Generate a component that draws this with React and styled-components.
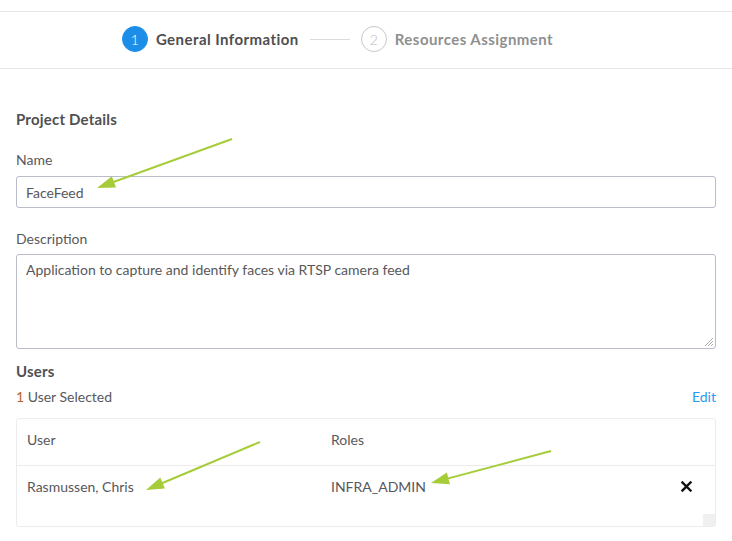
import React from "react";
import styled, { createGlobalStyle } from "styled-components";

const Global = createGlobalStyle`
  html, body { margin: 0; padding: 0; background: #fff; }
  body { font-family: Lato, "Liberation Sans", sans-serif; color: #58585b; }
  * { box-sizing: border-box; }
`;

const Page = styled.div`
  position: relative;
  width: 732px;
  height: 541px;
  padding-top: 11px;
  overflow: hidden;
`;

const StepBar = styled.div`
  height: 58px;
  border-top: 1px solid #e6e6e6;
  border-bottom: 1px solid #e6e6e6;
  display: flex;
  align-items: center;
  justify-content: center;
  padding-right: 57px;
  padding-bottom: 2px;
`;

const Step = styled.div`
  display: flex;
  align-items: center;
  gap: 8px;
`;

const Circle = styled.div`
  width: 26px;
  height: 26px;
  border-radius: 50%;
  display: flex;
  align-items: center;
  justify-content: center;
  font-size: 14px;
  font-weight: 300;
  color: ${(p) => (p.$active ? "#fff" : "#b9b9b9")};
  background: ${(p) => (p.$active ? "#1d8ee8" : "#fff")};
  border: 1px solid ${(p) => (p.$active ? "#1d8ee8" : "#c8c8c8")};
`;

const StepLabel = styled.span`
  font-size: 15px;
  font-weight: 700;
  letter-spacing: 0.45px;
  color: ${(p) => (p.$active ? "#4e4e50" : "#8f8f8f")};
`;

const Connector = styled.div`
  width: 40px;
  height: 1px;
  background: #dcdcdc;
  margin: 0 11px 0 11px;
`;

const Content = styled.div`
  padding: 0 16px;
`;

const SectionTitle = styled.h2`
  margin: ${(p) => p.$mt || 0}px 0 0;
  font-size: 15px;
  font-weight: 700;
  line-height: 20px;
  letter-spacing: 0.2px;
  color: #505052;
`;

const Label = styled.div`
  margin-top: ${(p) => p.$mt || 0}px;
  font-size: 14px;
  line-height: 18px;
  color: #58585b;
`;

const Input = styled.div`
  margin-top: ${(p) => p.$mt || 0}px;
  height: 32px;
  border: 1px solid #b9bdca;
  border-radius: 3px;
  padding: 0 9px;
  display: flex;
  align-items: center;
  font-size: 14px;
  color: #58585b;
`;

const TextArea = styled.div`
  position: relative;
  margin-top: ${(p) => p.$mt || 0}px;
  height: 95px;
  border: 1px solid #b9bdca;
  border-radius: 3px;
  padding: 6px 9px;
  font-size: 14px;
  line-height: 18px;
  color: #58585b;
`;

const Grip = styled.svg`
  position: absolute;
  right: 1px;
  bottom: 1px;
`;

const SelectedRow = styled.div`
  margin-top: ${(p) => p.$mt || 0}px;
  display: flex;
  justify-content: space-between;
  align-items: center;
  font-size: 14px;
  line-height: 18px;
`;

const Count = styled.span`
  color: #b8642c;
`;

const EditLink = styled.a`
  color: #2a9af0;
  text-decoration: none;
  font-size: 14px;
`;

const Table = styled.div`
  margin-top: 12px;
  border: 1px solid #ececec;
  border-radius: 3px;
  height: 109px;
  display: flex;
  flex-direction: column;
`;

const Row = styled.div`
  display: grid;
  grid-template-columns: 304px 1fr 40px;
  align-items: center;
  height: ${(p) => p.$h}px;
  padding-bottom: ${(p) => p.$pb || 0}px;
  border-bottom: ${(p) => (p.$line ? "1px solid #ececec" : "none")};
  font-size: 14px;
  color: #58585b;
`;

const Cell = styled.div`
  padding-left: 10px;
`;

const RemoveCell = styled.div`
  display: flex;
  align-items: center;
  padding-left: 6px;
`;

const ScrollFoot = styled.div`
  margin-top: auto;
  display: flex;
  justify-content: flex-end;
`;

const ScrollCorner = styled.div`
  width: 12px;
  height: 12px;
  background: #f0f0f0;
`;

const Overlay = styled.svg`
  position: absolute;
  left: 0;
  top: 0;
  pointer-events: none;
`;

function Arrow({ x1, y1, x2, y2 }) {
  const dx = x2 - x1;
  const dy = y2 - y1;
  const len = Math.hypot(dx, dy);
  const ux = dx / len;
  const uy = dy / len;
  const hl = 18;
  const hw = 6;
  const bx = x2 - ux * hl;
  const by = y2 - uy * hl;
  const px = -uy;
  const py = ux;
  const pts = `${x2},${y2} ${bx + px * hw},${by + py * hw} ${bx - px * hw},${by - py * hw}`;
  return (
    <g>
      <line x1={x1} y1={y1} x2={bx + ux * 2} y2={by + uy * 2} stroke="#a6cc3a" strokeWidth="2" />
      <polygon points={pts} fill="#a6cc3a" />
    </g>
  );
}

export default function App() {
  return (
    <>
      <Global />
      <Page>
        <StepBar>
          <Step>
            <Circle $active>1</Circle>
            <StepLabel $active>General Information</StepLabel>
          </Step>
          <Connector />
          <Step>
            <Circle>2</Circle>
            <StepLabel>Resources Assignment</StepLabel>
          </Step>
        </StepBar>
        <Content>
          <SectionTitle $mt={40}>Project Details</SectionTitle>
          <Label $mt={22}>Name</Label>
          <Input $mt={7}>FaceFeed</Input>
          <Label $mt={22}>Description</Label>
          <TextArea $mt={6}>
            Application to capture and identify faces via RTSP camera feed
            <Grip width="12" height="12" viewBox="0 0 12 12">
              <line x1="11" y1="3" x2="3" y2="11" stroke="#b0b0b0" strokeWidth="1" />
              <line x1="11" y1="6" x2="6" y2="11" stroke="#b0b0b0" strokeWidth="1" />
              <line x1="11" y1="9" x2="9" y2="11" stroke="#b0b0b0" strokeWidth="1" />
            </Grip>
          </TextArea>
          <SectionTitle $mt={12}>Users</SectionTitle>
          <SelectedRow $mt={7}>
            <span>
              <Count>1</Count> User Selected
            </span>
            <EditLink href="#">Edit</EditLink>
          </SelectedRow>
          <Table>
            <Row $h={47} $pb={6} $line>
              <Cell>User</Cell>
              <Cell>Roles</Cell>
              <span />
            </Row>
            <Row $h={45} $pb={4}>
              <Cell>Rasmussen, Chris</Cell>
              <Cell>INFRA_ADMIN</Cell>
              <RemoveCell>
                <svg width="11" height="11" viewBox="0 0 11 11">
                  <path d="M1.5 1.5 L9.5 9.5 M9.5 1.5 L1.5 9.5" stroke="#111" strokeWidth="2.4" strokeLinecap="square" />
                </svg>
              </RemoveCell>
            </Row>
            <ScrollFoot>
              <ScrollCorner />
            </ScrollFoot>
          </Table>
        </Content>
        <Overlay width="732" height="541" viewBox="0 0 732 541">
          <Arrow x1={232} y1={139} x2={97} y2={188} />
          <Arrow x1={260} y1={442} x2={146} y2={490} />
          <Arrow x1={551} y1={451} x2={431} y2={483} />
        </Overlay>
      </Page>
    </>
  );
}
